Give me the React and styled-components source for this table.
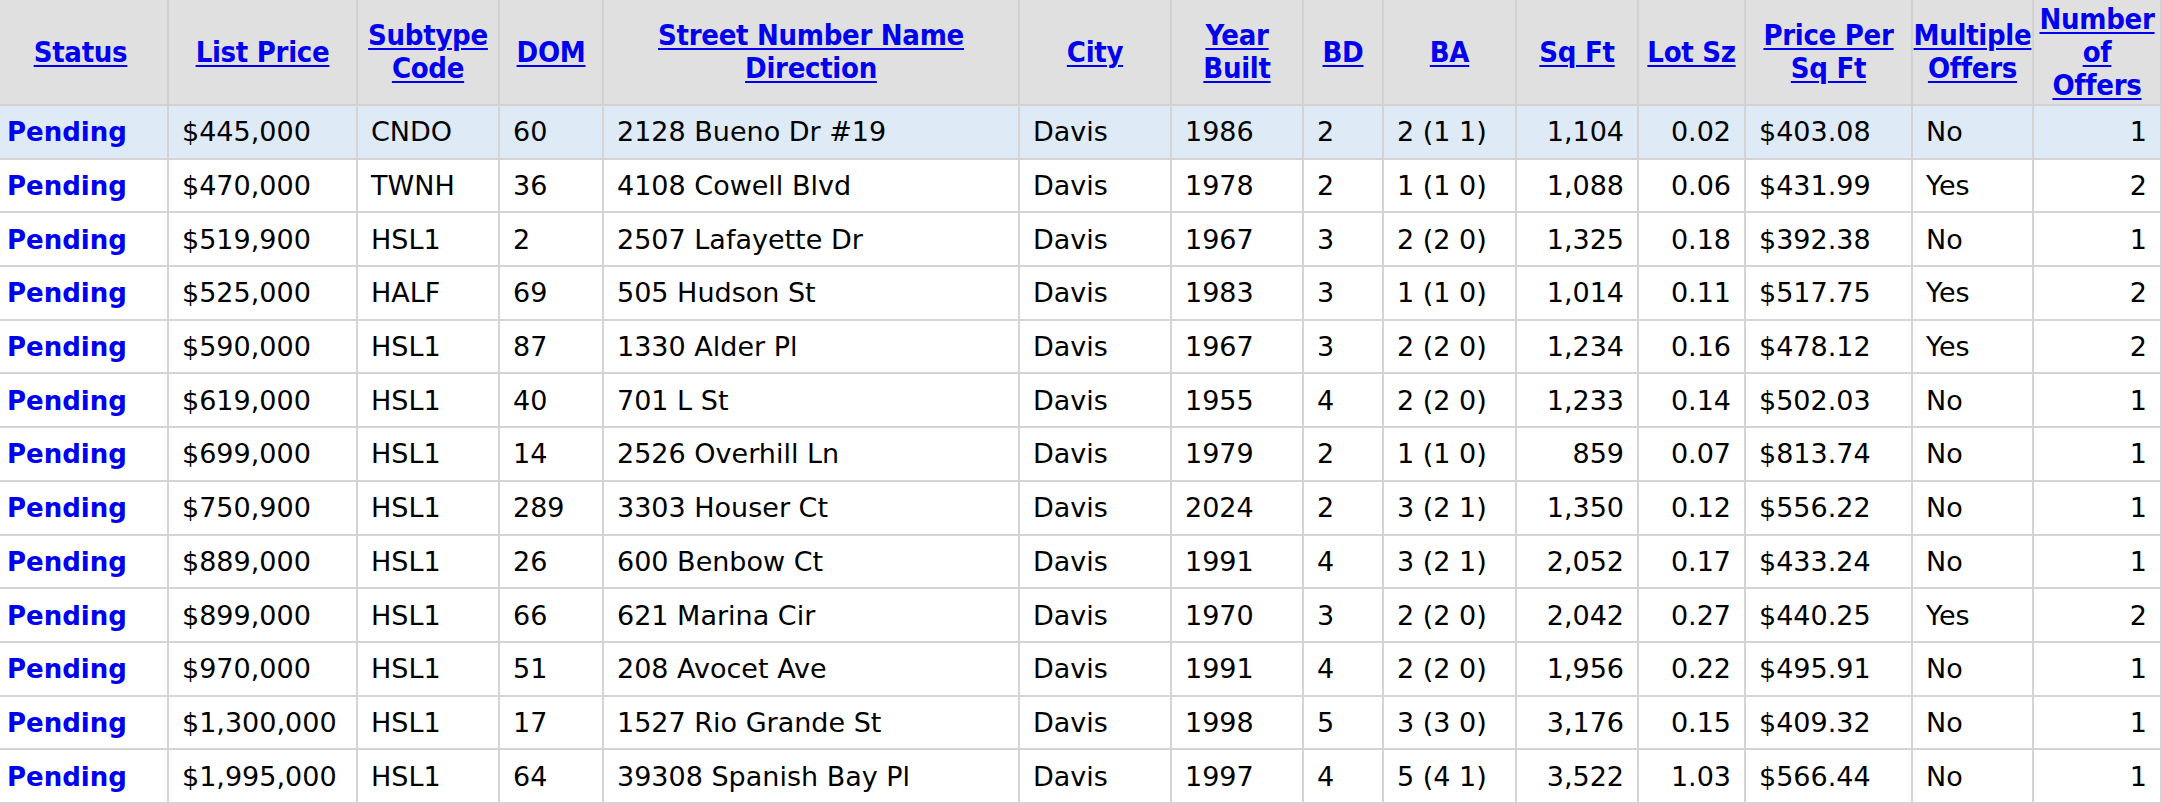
import React from "react";
import styled, { createGlobalStyle } from "styled-components";

const columns = [
  { id: "status", label: ["Status"], width: 175 },
  { id: "price", label: ["List Price"], width: 189 },
  { id: "subtype", label: ["Subtype", "Code"], width: 142 },
  { id: "dom", label: ["DOM"], width: 104 },
  { id: "street", label: ["Street Number Name", "Direction"], width: 416 },
  { id: "city", label: ["City"], width: 152 },
  { id: "year", label: ["Year", "Built"], width: 132 },
  { id: "bd", label: ["BD"], width: 80 },
  { id: "ba", label: ["BA"], width: 133 },
  { id: "sqft", label: ["Sq Ft"], width: 122, right: true },
  { id: "lot", label: ["Lot Sz"], width: 107, right: true },
  { id: "ppsf", label: ["Price Per", "Sq Ft"], width: 167 },
  { id: "multi", label: ["Multiple", "Offers"], width: 121 },
  { id: "offers", label: ["Number", "of", "Offers"], width: 128, right: true },
];

const tableWidth = columns.reduce((sum, col) => sum + col.width, 0);

const listings = [
  ["$445,000", "CNDO", "60", "2128 Bueno Dr #19", "1986", "2", "2 (1 1)", "1,104", "0.02", "$403.08", "No", "1"],
  ["$470,000", "TWNH", "36", "4108 Cowell Blvd", "1978", "2", "1 (1 0)", "1,088", "0.06", "$431.99", "Yes", "2"],
  ["$519,900", "HSL1", "2", "2507 Lafayette Dr", "1967", "3", "2 (2 0)", "1,325", "0.18", "$392.38", "No", "1"],
  ["$525,000", "HALF", "69", "505 Hudson St", "1983", "3", "1 (1 0)", "1,014", "0.11", "$517.75", "Yes", "2"],
  ["$590,000", "HSL1", "87", "1330 Alder Pl", "1967", "3", "2 (2 0)", "1,234", "0.16", "$478.12", "Yes", "2"],
  ["$619,000", "HSL1", "40", "701 L St", "1955", "4", "2 (2 0)", "1,233", "0.14", "$502.03", "No", "1"],
  ["$699,000", "HSL1", "14", "2526 Overhill Ln", "1979", "2", "1 (1 0)", "859", "0.07", "$813.74", "No", "1"],
  ["$750,900", "HSL1", "289", "3303 Houser Ct", "2024", "2", "3 (2 1)", "1,350", "0.12", "$556.22", "No", "1"],
  ["$889,000", "HSL1", "26", "600 Benbow Ct", "1991", "4", "3 (2 1)", "2,052", "0.17", "$433.24", "No", "1"],
  ["$899,000", "HSL1", "66", "621 Marina Cir", "1970", "3", "2 (2 0)", "2,042", "0.27", "$440.25", "Yes", "2"],
  ["$970,000", "HSL1", "51", "208 Avocet Ave", "1991", "4", "2 (2 0)", "1,956", "0.22", "$495.91", "No", "1"],
  ["$1,300,000", "HSL1", "17", "1527 Rio Grande St", "1998", "5", "3 (3 0)", "3,176", "0.15", "$409.32", "No", "1"],
  ["$1,995,000", "HSL1", "64", "39308 Spanish Bay Pl", "1997", "4", "5 (4 1)", "3,522", "1.03", "$566.44", "No", "1"],
];

function App() {
  return (
    <>
      <GlobalStyle />
      <Table $width={tableWidth}>
        <colgroup>
          {columns.map((col) => (
            <col key={col.id} style={{ width: col.width }} />
          ))}
        </colgroup>
        <thead>
          <tr>
            {columns.map((col) => (
              <HeadCell key={col.id}>
                <SortLink href="#">
                  {col.label.map((line, i) => (
                    <React.Fragment key={i}>
                      {i > 0 && <br />}
                      {line}
                    </React.Fragment>
                  ))}
                </SortLink>
              </HeadCell>
            ))}
          </tr>
        </thead>
        <tbody>
          {listings.map((row, index) => (
            <Row key={row[3]} $selected={index === 0}>
              <Cell>
                <StatusLink href="#">Pending</StatusLink>
              </Cell>
              {row.slice(0, 4).map((value, i) => (
                <Cell key={i}>{value}</Cell>
              ))}
              <Cell>Davis</Cell>
              {row.slice(4).map((value, i) => (
                <Cell key={i + 4} $right={columns[i + 6].right}>
                  {value}
                </Cell>
              ))}
            </Row>
          ))}
        </tbody>
      </Table>
    </>
  );
}

const GlobalStyle = createGlobalStyle`
  body {
    margin: 0;
    background: #ffffff;
    overflow: hidden;
  }
`;

const Table = styled.table`
  table-layout: fixed;
  border-collapse: collapse;
  width: ${(p) => p.$width}px;
  margin: -2px 0 0 -8px;
  font-family: "DejaVu Sans", "Liberation Sans", sans-serif;
`;

const HeadCell = styled.th`
  height: 104px;
  padding: 0;
  background: #e0e0e0;
  border: 2px solid #d2d2d2;
  text-align: center;
  vertical-align: middle;
  white-space: nowrap;
  font-family: "DejaVu Sans Condensed", "Liberation Sans Narrow", sans-serif;
  font-stretch: condensed;
  font-weight: bold;
  font-size: 29px;
  line-height: 33px;
  letter-spacing: -0.3px;
`;

const SortLink = styled.a`
  color: #0000ee;
  text-decoration: underline;
  text-decoration-thickness: 2px;
  text-underline-offset: 3px;
`;

const Row = styled.tr`
  background: ${(p) => (p.$selected ? "#deeaf6" : "#ffffff")};
`;

const Cell = styled.td`
  height: 51.7px;
  padding: 0 13px;
  border: 2px solid #d4d4d4;
  text-align: ${(p) => (p.$right ? "right" : "left")};
  vertical-align: middle;
  white-space: nowrap;
  overflow: hidden;
  font-size: 27px;
  color: #000000;
`;

const StatusLink = styled.a`
  color: #0000ee;
  font-size: 26px;
  font-weight: bold;
  text-decoration: none;
`;

export default App;
